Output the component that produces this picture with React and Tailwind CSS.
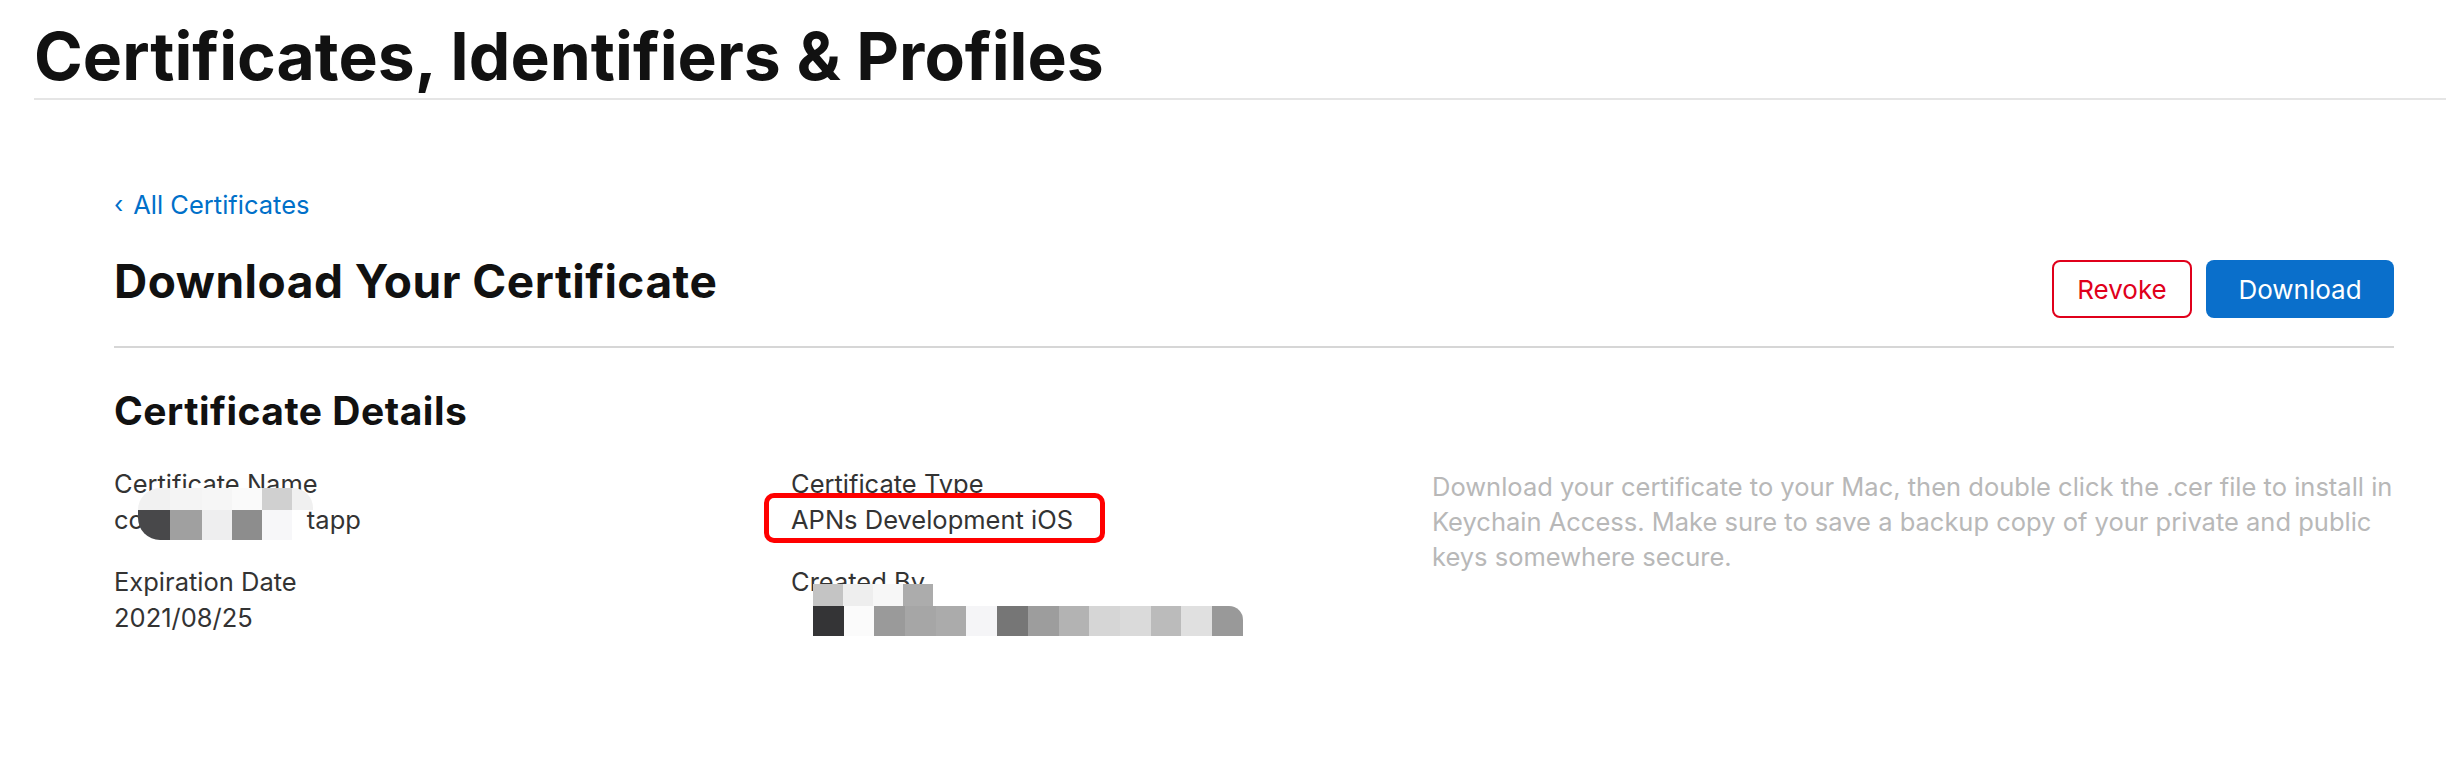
import React from "react";

const nameTop = [
  ["w-[32px]", "bg-[#f1f1f1]"],
  ["w-[32px]", "bg-[#f4f4f4]"],
  ["w-[30px]", "bg-[#f6f6f6]"],
  ["w-[30px]", "bg-[#fafafa]"],
  ["w-[30px]", "bg-[#d0d0d0]"],
  ["w-[21px]", "bg-[#f0f0f0]"],
];

const nameBottom = [
  ["w-[32px]", "bg-[#48484a]"],
  ["w-[32px]", "bg-[#a0a0a0]"],
  ["w-[30px]", "bg-[#eeeeef]"],
  ["w-[30px]", "bg-[#8d8d8d]"],
  ["w-[30px]", "bg-[#f7f7f9]"],
];

const creatorTop = ["bg-[#c4c4c4]", "bg-[#eeeeee]", "bg-[#f7f7f7]", "bg-[#acacac]"];

const creatorBottom = [
  "bg-[#343436]",
  "bg-[#fbfbfb]",
  "bg-[#9a9a9a]",
  "bg-[#a6a6a6]",
  "bg-[#ababab]",
  "bg-[#f5f5f7]",
  "bg-[#767676]",
  "bg-[#9d9d9d]",
  "bg-[#b3b3b3]",
  "bg-[#d6d6d6]",
  "bg-[#dadada]",
  "bg-[#bbbbbb]",
  "bg-[#e0e0e0]",
  "bg-[#999999]",
];

// pixelated mask over the certificate name
const NameMask = () => (
  <div className="absolute left-[24px] top-[22px] w-[175px] h-[52px] rounded-l-[22px] rounded-tr-[20px] overflow-hidden">
    <div className="flex h-[22px]">
      {nameTop.map(([w, bg], i) => (
        <div key={i} className={`${w} ${bg} h-full`} />
      ))}
    </div>
    <div className="flex h-[30px]">
      {nameBottom.map(([w, bg], i) => (
        <div key={i} className={`${w} ${bg} h-full`} />
      ))}
    </div>
  </div>
);

const CreatorMask = () => (
  <div className="absolute left-[22px] top-[20px] w-[430px] h-[52px]">
    <div className="flex h-[22px]">
      {creatorTop.map((bg, i) => (
        <div key={i} className={`w-[30px] h-full ${bg}`} />
      ))}
    </div>
    <div className="flex h-[30px] rounded-tr-[14px] overflow-hidden">
      {creatorBottom.map((bg, i) => (
        <div key={i} className={`w-[30.7px] h-full ${bg}`} />
      ))}
    </div>
  </div>
);

const Field = ({ label, children }) => (
  <div className="text-[25.5px] leading-[36px] text-[#333333]">
    <div>{label}</div>
    <div>{children}</div>
  </div>
);

export default function App() {
  return (
    <div className="min-h-[776px] w-full bg-white font-['Inter',sans-serif] text-[#111111]">
      <header className="ml-[34px] pt-[23px] pb-[9px] border-b-2 border-[#e5e5e5]">
        <h1 className="text-[66px] leading-[66px] font-bold">
          Certificates, Identifiers &amp; Profiles
        </h1>
      </header>

      <main className="ml-[114px] mr-[52px]">
        <a className="mt-[87px] flex items-center gap-[10px] text-[25.5px] leading-[36px] text-[#0070c9]">
          <span className="text-[24px]">‹</span>
          <span>All Certificates</span>
        </a>

        <div className="mt-[32px] flex items-start justify-between pb-[28px] border-b-2 border-[#d6d6d6]">
          <h2 className="text-[46px] leading-[53px] font-bold tracking-[0.5px]">Download Your Certificate</h2>
          <div className="mt-[5px] flex gap-[14px]">
            <button className="h-[58px] w-[140px] rounded-[8px] border-2 border-[#e0001b] text-[26px] text-[#e0001b]">
              Revoke
            </button>
            <button className="h-[58px] w-[188px] rounded-[8px] bg-[#0a6fcb] text-[26px] text-white">
              Download
            </button>
          </div>
        </div>

        <h3 className="mt-[40px] text-[39px] leading-[45px] font-bold tracking-[0.5px]">Certificate Details</h3>

        <div className="mt-[33px] grid grid-cols-[677px_641px_1fr]">
          <div className="flex flex-col gap-[26px]">
            <div className="relative">
              <Field label="Certificate Name">
                co<span className="inline-block w-[163px]" />tapp
              </Field>
              <NameMask />
            </div>
            <Field label="Expiration Date">2021/08/25</Field>
          </div>

          <div className="flex flex-col gap-[26px]">
            <div className="relative">
              <Field label="Certificate Type">APNs Development iOS</Field>
              <div className="absolute left-[-27px] top-[27px] w-[341px] h-[50px] rounded-[10px] border-[5px] border-[#ff0000]" />
            </div>
            <div className="relative">
              <Field label="Created By">
                <span className="inline-block w-[1px]">&nbsp;</span>
              </Field>
              <CreatorMask />
            </div>
          </div>

          <p className="mt-[3px] text-[25.5px] leading-[35px] text-[#b8b8b8]">
            Download your certificate to your Mac, then double click the .cer file to install in
            <br />
            Keychain Access. Make sure to save a backup copy of your private and public
            <br />
            keys somewhere secure.
          </p>
        </div>
      </main>
    </div>
  );
}
